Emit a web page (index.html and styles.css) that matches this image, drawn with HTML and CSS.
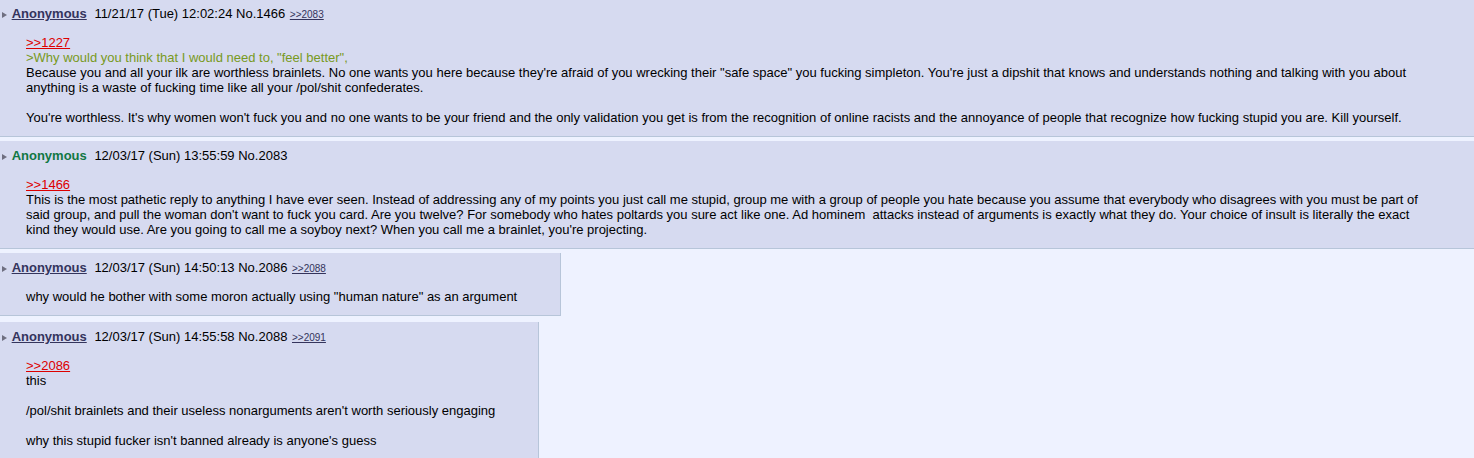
FILE: index.html
```html
<!DOCTYPE html>
<html>
<head>
<meta charset="utf-8">
<link rel="stylesheet" href="styles.css">
</head>
<body>
<div class="thread">
  <div class="post">
    <div class="info">
      <svg class="arrow" width="5" height="6" viewBox="0 0 5 6"><polygon points="0,0 5,3 0,6"/></svg>
      <a class="name email">Anonymous</a>
      <span class="date">11/21/17 (Tue) 12:02:24 No.1466</span>
      <a class="backlink">&gt;&gt;2083</a>
    </div>
    <blockquote class="message">
      <a class="quotelink">&gt;&gt;1227</a><br>
      <span class="quote">&gt;Why would you think that I would need to, "feel better",</span><br>
      Because you and all your ilk are worthless brainlets. No one wants you here because they're afraid of you wrecking their "safe space" you fucking simpleton. You're just a dipshit that knows and understands nothing and talking with you about anything is a waste of fucking time like all your /pol/shit confederates.<br>
      <br>
      You're worthless. It's why women won't fuck you and no one wants to be your friend and the only validation you get is from the recognition of online racists and the annoyance of people that recognize how fucking stupid you are. Kill yourself.
    </blockquote>
  </div>

  <div class="post">
    <div class="info">
      <svg class="arrow" width="5" height="6" viewBox="0 0 5 6"><polygon points="0,0 5,3 0,6"/></svg>
      <span class="name">Anonymous</span>
      <span class="date">12/03/17 (Sun) 13:55:59 No.2083</span>
    </div>
    <blockquote class="message">
      <a class="quotelink">&gt;&gt;1466</a><br>
      This is the most pathetic reply to anything I have ever seen. Instead of addressing any of my points you just call me stupid, group me with a group of people you hate because you assume that everybody who disagrees with you must be part of said group, and pull the woman don't want to fuck you card. Are you twelve? For somebody who hates poltards you sure act like one. Ad hominem&nbsp; attacks instead of arguments is exactly what they do. Your choice of insult is literally the exact kind they would use. Are you going to call me a soyboy next? When you call me a brainlet, you're projecting.
    </blockquote>
  </div>

  <div class="post">
    <div class="info">
      <svg class="arrow" width="5" height="6" viewBox="0 0 5 6"><polygon points="0,0 5,3 0,6"/></svg>
      <a class="name email">Anonymous</a>
      <span class="date">12/03/17 (Sun) 14:50:13 No.2086</span>
      <a class="backlink">&gt;&gt;2088</a>
    </div>
    <blockquote class="message">
      why would he bother with some moron actually using "human nature" as an argument
    </blockquote>
  </div>

  <div class="post">
    <div class="info">
      <svg class="arrow" width="5" height="6" viewBox="0 0 5 6"><polygon points="0,0 5,3 0,6"/></svg>
      <a class="name email">Anonymous</a>
      <span class="date">12/03/17 (Sun) 14:55:58 No.2088</span>
      <a class="backlink">&gt;&gt;2091</a>
    </div>
    <blockquote class="message">
      <a class="quotelink">&gt;&gt;2086</a><br>
      this<br>
      <br>
      /pol/shit brainlets and their useless nonarguments aren't worth seriously engaging<br>
      <br>
      why this stupid fucker isn't banned already is anyone's guess
    </blockquote>
  </div>
</div>
</body>
</html>
```

FILE: styles.css
```css
html, body {
  margin: 0;
  padding: 0;
  background: #eef2ff;
  font-family: "Liberation Sans", Arial, sans-serif;
  font-size: 13px;
  color: #000;
  overflow: hidden;
}

.thread {
  margin-top: -1px;
  margin-right: -1px;
}

.post {
  display: table;
  background: #d6daf0;
  border-right: 1px solid #b7c5d9;
  border-bottom: 1px solid #b7c5d9;
  margin: 0 0 4px 0;
  padding: 7px 0 0 0;
}

.post:last-child {
  margin-top: 6px;
}

.info {
  height: 16px;
  line-height: 16px;
  padding-left: 2px;
  white-space: nowrap;
}

.arrow {
  fill: #6f6f80;
  margin-right: 1px;
  vertical-align: 0;
}

.name {
  font-weight: bold;
  color: #117743;
  margin-right: 4px;
}

.name.email {
  color: #34345c;
  text-decoration: underline;
}

.date {
  margin-right: 1px;
}

.backlink {
  font-size: 10px;
  color: #34345c;
  text-decoration: underline;
}

.message {
  margin: 13px 43px 11px 26px;
  line-height: 15px;
}

.quotelink {
  color: #dd0000;
  text-decoration: underline;
}

.quote {
  color: #789922;
}
```
